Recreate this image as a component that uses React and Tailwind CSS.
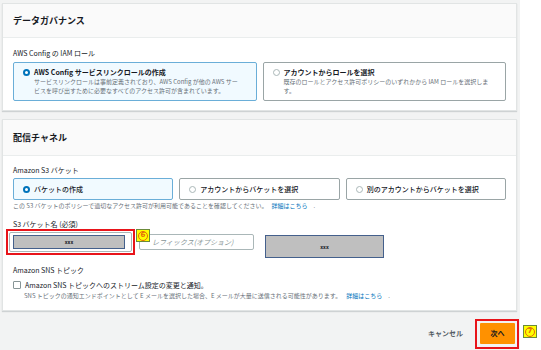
import React from 'react'

function Radio({ on }) {
  return on ? (
    <span className="block w-[7px] h-[7px] shrink-0 rounded-full border-2 border-[#0073bb] bg-white" />
  ) : (
    <span className="block w-[7px] h-[7px] shrink-0 rounded-full border border-[#aab7b8] bg-white" />
  )
}

function Tile({ on, title, children, tall }) {
  const box = on
    ? 'border-[#6aaed8] bg-[#f1faff]'
    : 'border-[#9aa5a6] bg-white'
  if (tall) {
    return (
      <div className={`flex-1 h-[39px] border rounded-[2px] pl-[9px] pr-[8px] pt-[5px] ${box}`}>
        <div className="flex items-center gap-[4px] h-[9px]">
          <Radio on={on} />
          <span className="text-[7px] leading-[9px] font-bold text-[#16191f] whitespace-nowrap">{title}</span>
        </div>
        <p className="pl-[11px] text-[6px] leading-[9px] text-[#687078] whitespace-nowrap">{children}</p>
      </div>
    )
  }
  return (
    <div className={`flex-1 h-[22px] border rounded-[2px] pl-[9px] flex items-center gap-[4px] ${box}`}>
      <Radio on={on} />
      <span className="text-[7px] leading-[9px] font-medium text-[#16191f] whitespace-nowrap">{title}</span>
    </div>
  )
}

// yellow annotation marker with a circled number
function Badge({ n, className }) {
  return (
    <span className={`absolute w-[14px] h-[13px] bg-[#ffff00] border border-[#6b8a3a] flex items-center justify-center ${className}`}>
      <span className="w-[10px] h-[10px] rounded-full border border-[#e36c09] flex items-center justify-center text-[7px] leading-none font-bold text-[#e36c09] font-['DejaVu_Sans',sans-serif]">
        {n}
      </span>
    </span>
  )
}

export default function App() {
  return (
    <div className="w-[541px] h-[350px] bg-white flex font-['Noto_Sans_CJK_JP','Noto_Sans',sans-serif] overflow-hidden">
      <div className="w-[520px] h-full bg-[#f2f3f3] pl-[2px] pr-[3px] pt-[3px] flex flex-col">
        {/* データガバナンス */}
        <section className="bg-white border border-[#e1e4e4] shadow-[0_1px_1px_rgba(0,28,36,0.15)]">
          <header className="h-[34px] bg-[#fafafa] border-b border-[#eaeded] px-[10px] flex items-center">
            <h2 className="text-[9px] font-bold text-[#16191f]">データガバナンス</h2>
          </header>
          <div className="px-[10px] pt-[10px] pb-[9px]">
            <p className="text-[7px] leading-[10px] text-[#16191f]">AWS Config の IAM ロール</p>
            <div className="mt-[4px] flex gap-[6px]">
              <Tile tall on title="AWS Config サービスリンクロールの作成">
                サービスリンクロールは事前定義されており、AWS Config が他の AWS サー<br />
                ビスを呼び出すために必要なすべてのアクセス許可が含まれています。
              </Tile>
              <Tile tall title="アカウントからロールを選択">
                既存のロールとアクセス許可ポリシーのいずれかから IAM ロールを選択しま<br />
                す。
              </Tile>
            </div>
          </div>
        </section>

        {/* 配信チャネル */}
        <section className="mt-[8px] bg-white border border-[#e1e4e4] shadow-[0_1px_1px_rgba(0,28,36,0.15)]">
          <header className="h-[36px] bg-[#fafafa] border-b border-[#eaeded] px-[10px] flex items-center">
            <h2 className="text-[9px] font-bold text-[#16191f]">配信チャネル</h2>
          </header>
          <div className="px-[10px] pt-[9px] pb-[10px]">
            <p className="text-[7px] leading-[10px] text-[#16191f]">Amazon S3 バケット</p>
            <div className="mt-[3px] flex gap-[6px]">
              <Tile on title="バケットの作成" />
              <Tile title="アカウントからバケットを選択" />
              <Tile title="別のアカウントからバケットを選択" />
            </div>
            <p className="mt-[2px] text-[6px] leading-[8px] text-[#687078] whitespace-nowrap">
              この S3 バケットのポリシーで適切なアクセス許可が利用可能であることを確認してください。
              <span className="ml-[4px] text-[#0073bb]">詳細はこちら</span>
              <span className="ml-[6px]">.</span>
            </p>

            <p className="mt-[10px] text-[7px] leading-[9px] text-[#16191f]">S3 バケット名 (必須)</p>
            <div className="flex items-start">
              <div className="relative -ml-[7px] border-2 border-[#e8141a] p-[1px]">
                <div className="border border-[#aab7b8] rounded-[2px] pl-[3px] pr-[6px] py-[2px]">
                  <div className="w-[112px] h-[14px] bg-[#bfbfbf] border border-[#44608c] flex items-center justify-center text-[5px] font-bold text-[#16191f]">
                    xxx
                  </div>
                </div>
                <Badge n="6" className="left-[128px] -top-[2px] z-10" />
              </div>
              <div className="ml-[4px] mt-[5px] w-[115px] h-[16px] border border-[#aab7b8] rounded-[2px] bg-white pl-[12px] flex items-center">
                <span className="text-[7px] italic text-[#879596] whitespace-nowrap">レフィックス(オプション)</span>
              </div>
              <div className="ml-[11px] mt-[6px] w-[119px] h-[23px] bg-[#bfbfbf] border border-[#44608c] flex items-center justify-center text-[5px] font-bold text-[#16191f]">
                xxx
              </div>
            </div>

            <p className="mt-[7px] text-[7px] leading-[10px] text-[#16191f]">Amazon SNS トピック</p>
            <div className="mt-[5px] flex items-center gap-[4px] h-[10px]">
              <span className="block w-[8px] h-[8px] border border-[#879596] rounded-[1px] bg-white shrink-0" />
              <span className="text-[7px] leading-[10px] font-normal text-[#16191f] whitespace-nowrap">
                Amazon SNS トピックへのストリーム設定の変更と通知。
              </span>
            </div>
            <p className="mt-[2px] pl-[11px] text-[6px] leading-[8px] text-[#687078] whitespace-nowrap">
              SNS トピックの通知エンドポイントとして E メールを選択した場合、E メールが大量に送信される可能性があります。
              <span className="ml-[5px] text-[#0073bb]">詳細はこちら</span>
              <span className="ml-[6px]">.</span>
            </p>
          </div>
        </section>

        {/* footer */}
        <div className="flex justify-end items-start pt-[8px] -mr-[2px]">
          <span className="mt-[9px] mr-[12px] text-[7px] leading-[10px] font-bold text-[#545b64]">キャンセル</span>
          <div className="relative border-2 border-[#e8141a] pl-[3px] pr-[2px] pt-[2px] pb-[3px]">
            <div className="w-[35px] h-[21px] bg-[#ff9100] rounded-[1px] flex items-center justify-center text-[7px] font-bold text-[#16191f]">
              次へ
            </div>
            <Badge n="7" className="left-[46px] top-[4px]" />
          </div>
        </div>
      </div>
    </div>
  )
}
